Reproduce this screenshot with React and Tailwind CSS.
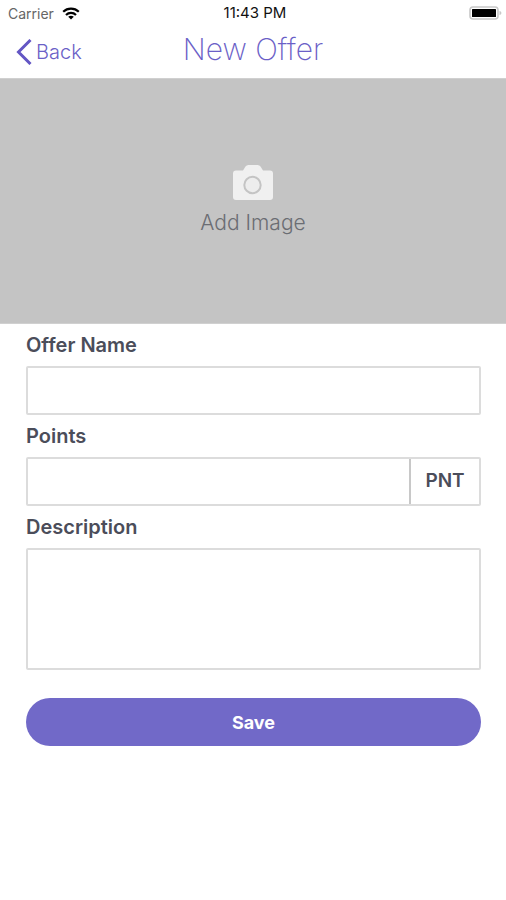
function WifiIcon() {
  return (
    <svg viewBox="0 0 18 13" className="h-[13px] w-[18px]" fill="none" stroke="#000" strokeWidth="2.2" aria-hidden="true">
      <path d="M1.2 4.8C5.6.6 12.4.6 16.8 4.8" />
      <path d="M4 8C6.8 5.2 11.2 5.2 14 8" />
      <path d="M9 12.4 6.2 9.8C7.8 8.4 10.2 8.4 11.8 9.8Z" fill="#000" stroke="none" />
    </svg>
  );
}

function BatteryIcon() {
  return (
    <svg viewBox="0 0 33 14" className="h-[14px] w-[33px]" aria-hidden="true">
      <rect x="1" y="1" width="28" height="12" rx="3" fill="#fff" stroke="#c8c8c8" strokeWidth="1.6" />
      <rect x="3" y="3" width="24" height="8" rx="0.5" fill="#000" />
      <path d="M30.5 5C33 5.5 33 8.5 30.5 9Z" fill="#c8c8c8" />
    </svg>
  );
}

function CameraIcon() {
  return (
    <svg viewBox="0 0 40 35" className="h-[35px] w-[40px]" aria-hidden="true">
      <path
        d="M3 5.5H10L12.5 1.5Q13.4 0 15.5 0H24.5Q26.6 0 27.5 1.5L30 5.5H37Q40 5.5 40 8.5V32Q40 35 37 35H3Q0 35 0 32V8.5Q0 5.5 3 5.5Z"
        fill="#f0f0f0"
      />
      <circle cx="19.5" cy="20" r="8.2" fill="#ededed" stroke="#c4c4c4" strokeWidth="2" />
    </svg>
  );
}

function Label({ htmlFor, children }) {
  return (
    <label htmlFor={htmlFor} className="block text-[20px] leading-[42px] font-semibold text-[#4b4d5a]">
      {children}
    </label>
  );
}

export default function App() {
  return (
    <div className="min-h-screen bg-white font-[Inter,'Liberation_Sans',sans-serif]">
      <div className="grid h-[26px] grid-cols-[1fr_auto_1fr] items-center pl-2 pr-1 text-[14px]">
        <div className="flex items-center gap-2 text-[#666]">
          <span>Carrier</span>
          <WifiIcon />
        </div>
        <span className="text-[15px] text-[#111]">11:43 PM</span>
        <div className="flex justify-end">
          <BatteryIcon />
        </div>
      </div>

      <header className="grid h-[52px] grid-cols-[1fr_auto_1fr] items-center px-4 text-[#6b5fc7]">
        <a href="#back" className="flex items-center gap-1 text-[20px] font-light">
          <svg viewBox="0 0 16 26" className="h-[26px] w-[16px]" fill="none" stroke="#6356c4" strokeWidth="3" aria-hidden="true">
            <path d="M14.5 1 2.5 13 14.5 25" />
          </svg>
          Back
        </a>
        <h1 className="pb-1.5 text-[30px] leading-[40px] font-extralight">New Offer</h1>
      </header>

      <button
        type="button"
        className="flex h-[246px] w-full flex-col items-center justify-center gap-2 border-y border-[#d0d0d0] bg-[#c4c4c4] text-[21px] leading-[30px] font-light text-[#6b6d73]"
      >
        <CameraIcon />
        Add Image
      </button>

      <form className="pr-[25px] pl-[26px]" onSubmit={(e) => e.preventDefault()}>
        <Label htmlFor="offer-name">Offer Name</Label>
        <input id="offer-name" type="text" className="block h-[49px] w-full rounded-[2px] border-2 border-[#dcdcdc] px-3 text-[19px]" />

        <Label htmlFor="points">Points</Label>
        <div className="flex h-[49px] rounded-[2px] border-2 border-[#dcdcdc]">
          <input id="points" type="text" inputMode="numeric" className="min-w-0 flex-1 px-3 text-[19px]" />
          <span className="flex w-[70px] items-center justify-center border-l-2 border-[#c8c8c8] text-[19px] font-semibold text-[#4b4d5a]">
            PNT
          </span>
        </div>

        <Label htmlFor="description">Description</Label>
        <textarea id="description" className="block h-[122px] w-full resize-none rounded-[2px] border-2 border-[#dcdcdc] p-3 text-[19px]" />

        <button type="submit" className="mt-7 block h-12 w-full rounded-full bg-[#7169c8] text-[18px] font-bold text-white">
          Save
        </button>
      </form>
    </div>
  );
}
